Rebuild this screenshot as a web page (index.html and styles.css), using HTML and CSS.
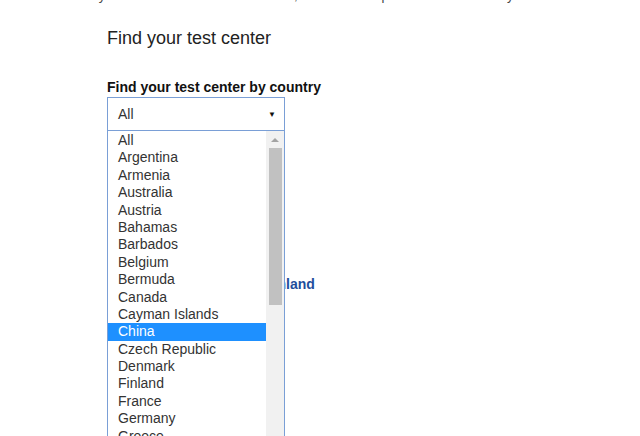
FILE: index.html
```html
<!DOCTYPE html>
<html lang="en">
<head>
<meta charset="utf-8">
<title>Find your test center</title>
<link rel="stylesheet" href="styles.css">
</head>
<body>
<div class="page">
  <p class="intro">If your test center is not listed below, there are no special instructions for your test center.</p>
  <h2 class="title">Find your test center</h2>
  <label class="field-label">Find your test center by country</label>
  <div class="select-wrap">
    <div class="select"><span>All</span><span class="arrow">&#9660;</span></div>
    <div class="dropdown">
      <ul class="options">
        <li class="option">All</li>
        <li class="option">Argentina</li>
        <li class="option">Armenia</li>
        <li class="option">Australia</li>
        <li class="option">Austria</li>
        <li class="option">Bahamas</li>
        <li class="option">Barbados</li>
        <li class="option">Belgium</li>
        <li class="option">Bermuda</li>
        <li class="option">Canada</li>
        <li class="option">Cayman Islands</li>
        <li class="option selected">China</li>
        <li class="option">Czech Republic</li>
        <li class="option">Denmark</li>
        <li class="option">Finland</li>
        <li class="option">France</li>
        <li class="option">Germany</li>
        <li class="option">Greece</li>
        <li class="option">Hong Kong</li>
      </ul>
      <div class="scrollbar">
        <div class="scroll-up"></div>
        <div class="thumb"></div>
      </div>
    </div>
  </div>
  <div class="results">
    <a class="country-link" href="#">Finland</a>
  </div>
</div>
</body>
</html>
```
FILE: styles.css
```css
html, body {
  margin: 0;
  background: #ffffff;
}
body {
  font-family: "Liberation Sans", Arial, sans-serif;
  color: #333333;
}
.page {
  padding-left: 107px;
  height: 436px;
  overflow: hidden;
}
.intro {
  margin: -12px 0 0 -19px;
  font-size: 13px;
  line-height: 15px;
  white-space: nowrap;
  color: #444444;
}
.title {
  margin: 24px 0 0 0;
  font-size: 18px;
  line-height: 22px;
  font-weight: normal;
  color: #222222;
}
.field-label {
  display: block;
  margin-top: 30px;
  font-size: 14px;
  line-height: 16px;
  font-weight: bold;
  color: #111111;
}
.select-wrap {
  position: relative;
  margin-top: 2px;
  width: 178px;
}
.select {
  box-sizing: border-box;
  height: 34px;
  border: 1px solid #7a9fd6;
  padding: 0 8px 0 10px;
  display: flex;
  align-items: center;
  justify-content: space-between;
  font-size: 14px;
  color: #333333;
}
.arrow {
  font-size: 8px;
  color: #111111;
}
.dropdown {
  position: absolute;
  top: 34px;
  left: 0;
  box-sizing: border-box;
  width: 178px;
  height: 330px;
  border: 1px solid #7a9fd6;
  border-top: none;
  background: #ffffff;
  display: flex;
  overflow: hidden;
}
.options {
  list-style: none;
  margin: 0;
  padding: 1px 0 0 0;
  flex: 1;
}
.option {
  height: 17.4px;
  line-height: 17.4px;
  padding-left: 10px;
  font-size: 14px;
  color: #333333;
  white-space: nowrap;
}
.option.selected {
  background: #1e90ff;
  color: #ffffff;
}
.scrollbar {
  width: 18px;
  background: #f1f1f1;
  display: flex;
  flex-direction: column;
  align-items: center;
}
.scroll-up {
  height: 17px;
  width: 100%;
  display: flex;
  align-items: center;
  justify-content: center;
}
.scroll-up::before {
  content: "";
  width: 0;
  height: 0;
  border-left: 4px solid transparent;
  border-right: 4px solid transparent;
  border-bottom: 4px solid #a3a3a3;
}
.thumb {
  width: 13px;
  height: 157px;
  background: #c1c1c1;
}
.results {
  margin-top: 144px;
  padding-left: 158px;
}
.country-link {
  font-size: 14px;
  line-height: 16px;
  font-weight: bold;
  color: #1f4e9c;
  text-decoration: none;
}
```
